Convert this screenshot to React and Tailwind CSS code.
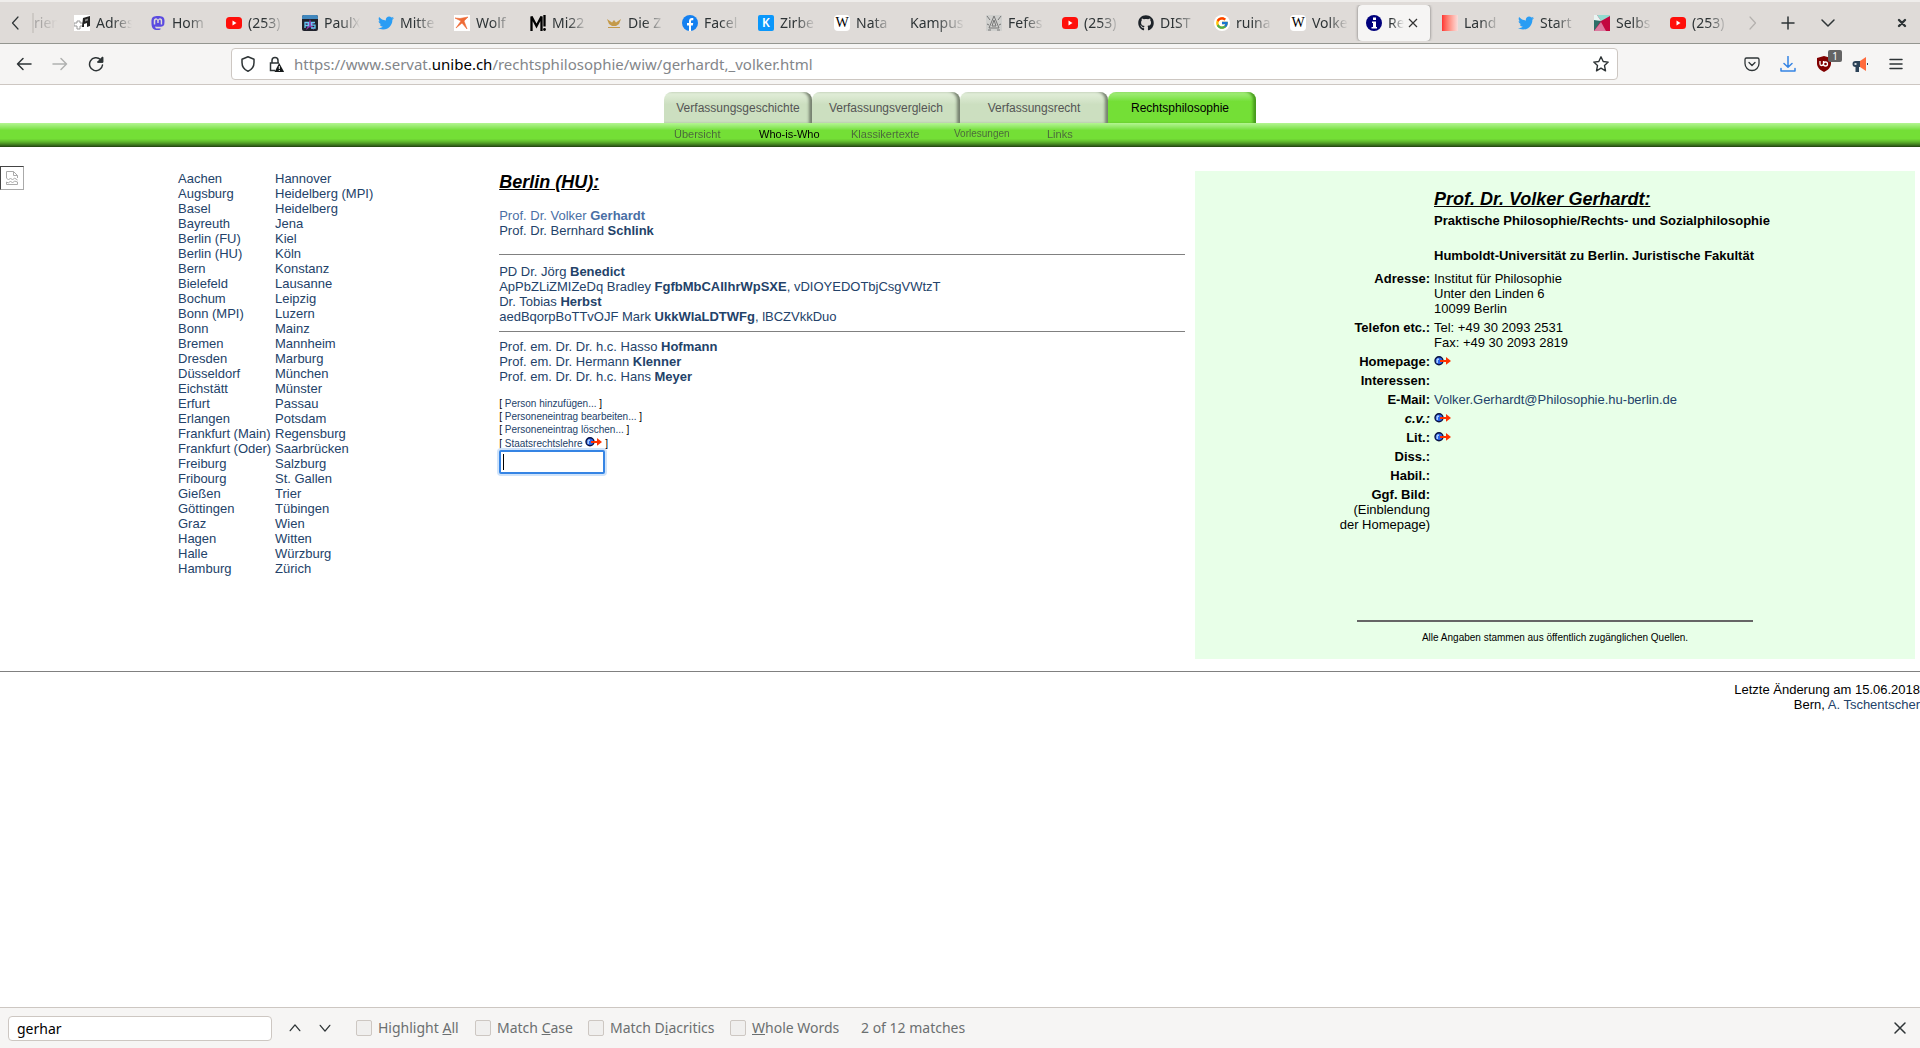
import React from "react";
import { FaTwitter, FaGithub, FaMastodon } from "react-icons/fa";
import { FcGoogle } from "react-icons/fc";

const citiesLeft = ["Aachen", "Augsburg", "Basel", "Bayreuth", "Berlin (FU)", "Berlin (HU)", "Bern", "Bielefeld", "Bochum", "Bonn (MPI)", "Bonn", "Bremen", "Dresden", "Düsseldorf", "Eichstätt", "Erfurt", "Erlangen", "Frankfurt (Main)", "Frankfurt (Oder)", "Freiburg", "Fribourg", "Gießen", "Göttingen", "Graz", "Hagen", "Halle", "Hamburg"];
const citiesRight = ["Hannover", "Heidelberg (MPI)", "Heidelberg", "Jena", "Kiel", "Köln", "Konstanz", "Lausanne", "Leipzig", "Luzern", "Mainz", "Mannheim", "Marburg", "München", "Münster", "Passau", "Potsdam", "Regensburg", "Saarbrücken", "Salzburg", "St. Gallen", "Trier", "Tübingen", "Wien", "Witten", "Würzburg", "Zürich"];

const Youtube = () => (
  <svg width="16" height="16" viewBox="0 0 16 16">
    <rect y="2" width="16" height="12" rx="3.5" fill="#ff0f0a" />
    <path d="M6.500 5.500v5l4-2.500z" fill="#fff" />
  </svg>
);
const Twitter = () => <FaTwitter size={16} color="#2a9df4" />;
const Wiki = () => (
  <span className="flex size-4 items-center justify-center rounded-sm bg-white font-['Liberation_Serif',serif] text-sm leading-4 text-black">W</span>
);
const Signpost = () => (
  <svg width="16" height="16" viewBox="0 0 16 16">
    <rect width="16" height="16" fill="#fff" />
    <path d="M0 8h3V6h3v2h3v3H6v3H3v-3H0z" fill="none" stroke="#999" />
    <path d="M9 3l7-2v10l-3 1V8l-3 1v3H8z" fill="#222" />
    <path d="M11 4.500l3-1v2l-3 1z" fill="#888" />
  </svg>
);
const PaulIcon = () => (
  <svg width="16" height="16" viewBox="0 0 16 16">
    <rect width="16" height="16" rx="2" fill="#20222c" />
    <path d="M2 0h12a2 2 0 0 1 2 2v2H0V2a2 2 0 0 1 2-2z" fill="#4187bd" />
    <path d="M8 4l1 3h4l-3 3 2 5-4-3-4 3 2-5-3-3h4z" fill="#8c37a8" />
    <path d="M3 13V7.500h3.500v3H3M13 7.500H9.500v2.700H13V13H9" fill="none" stroke="#68c8f5" strokeWidth="1.300" />
  </svg>
);
const Wolf = () => (
  <svg width="16" height="16" viewBox="0 0 16 16">
    <rect width="16" height="16" fill="#fff" />
    <path d="M1 3l5 .5L14 2l-4 4 3 8-5-6-6 5 5-7z" fill="#ee6a35" stroke="#ee6a35" strokeWidth=".6" />
  </svg>
);
const MIcon = () => (
  <svg width="16" height="16" viewBox="0 0 16 16">
    <path d="M1.500 16V1.500L6.500 11l5-9.500V16M14.500 0v11.500" fill="none" stroke="#000" strokeWidth="2.300" />
    <circle cx="14.500" cy="14.500" r="1.400" />
  </svg>
);
const Eagle = () => (
  <svg width="16" height="16" viewBox="0 0 16 16" fill="#c49a4a">
    <path d="M1 4l5 3.500L8 5l2 2.500L15 4l-2 5-3 2H6L3 9z" />
    <rect x="2" y="12" width="12" height="1" />
  </svg>
);
const Facebook = () => (
  <svg width="16" height="16" viewBox="0 0 16 16">
    <circle cx="8" cy="8" r="8" fill="#1480f0" />
    <path d="M7 16v-5.500H5V8h2V6.300C7 4.200 8.200 3 10 3h1.300v2.200h-1C9.300 5.200 9 5.700 9 6.500V8h2.200l-.4 2.500H9V16z" fill="#fff" />
  </svg>
);
const Zirbe = () => (
  <span className="flex size-4 items-center justify-center rounded-xs bg-[#0a97fb] text-xs leading-4 font-semibold text-white">K</span>
);
const Fefe = () => (
  <svg width="16" height="16" viewBox="0 0 16 16" fill="none" stroke="#777">
    <rect width="16" height="16" fill="#d0d0ce" stroke="none" />
    <path d="M8 1l5 12H3zM8 5l2 6H6zM1 1l3 4M15 1l-3 4M1 9l2 1M15 9l-2 1M2 15h3M11 15h3" />
  </svg>
);
const Google = () => (
  <span className="flex size-4 items-center justify-center rounded-full bg-white"><FcGoogle size={14} /></span>
);
const Info = () => (
  <svg width="16" height="16" viewBox="0 0 16 16">
    <circle cx="8" cy="8" r="8" fill="#00007c" />
    <path d="M7 2.500h3v2.500H7zM6 6.500h4V12h1v1.500H5.500V12H7V8H6z" fill="#fff" />
  </svg>
);
const Land = () => <span className="block size-4 bg-linear-to-r from-[#ff3030] to-[#f6dedc]" />;
const Selbst = () => (
  <svg width="16" height="16" viewBox="0 0 16 16">
    <rect width="16" height="16" fill="#c3073f" />
    <path d="M3 0h13v1L7 6z" fill="#93dbcf" />
    <path d="M0 0h3l4 6-7 2z" fill="#e9f5f3" />
    <path d="M0 5l7 1-7 10z" fill="#2d6e68" />
    <path d="M0 16L7 7l5 9z" fill="#dc7ba0" />
  </svg>
);
const Mastodon = () => <FaMastodon size={16} color="#5b4be0" />;
const Github = () => <FaGithub size={16} color="#1d2329" />;

const tabs = [
  [Signpost, "Adres"], [Mastodon, "Hom"], [Youtube, "(253)"], [PaulIcon, "PaulX"], [Twitter, "Mitte"],
  [Wolf, "Wolf"], [MIcon, "Mi22"], [Eagle, "Die Z"], [Facebook, "Facel"], [Zirbe, "Zirbe"], [Wiki, "Nata"], [null, "Kampus"],
  [Fefe, "Fefes"], [Youtube, "(253)"], [Github, "DIST"], [Google, "ruina"], [Wiki, "Volke"],
  [Info, "Rec", true], [Land, "Land"], [Twitter, "Start"], [Selbst, "Selbs"], [Youtube, "(253)"],
];

function Tab({ Icon, label, active }) {
  if (active) {
    return (
      <div className="mx-0.5 flex h-9 w-18 items-center gap-1.5 rounded-sm bg-[#f6f5f4] px-2 shadow-[0_0_3px_rgba(0,0,0,0.5)]">
        <span className="shrink-0"><Icon /></span>
        <span className="w-4 overflow-hidden whitespace-nowrap mask-r-from-20% mask-r-to-100%">{label}</span>
        <button aria-label="Close tab" className="-ml-0.5 shrink-0">
          <svg width="10" height="10" viewBox="0 0 10 10" stroke="#333" strokeWidth="1.200"><path d="M1 1l8 8M9 1l-8 8" /></svg>
        </button>
      </div>
    );
  }
  return (
    <button className="flex h-9 w-19 items-center gap-1.5 pr-1 pl-2.5 text-left">
      {Icon && <span className="shrink-0"><Icon /></span>}
      <span className="min-w-0 flex-1 overflow-hidden whitespace-nowrap mask-r-from-40% mask-r-to-90%">{label}</span>
    </button>
  );
}

const Stroke = ({ size = 16, color = "#2e3436", width = 1.5, d, children }) => (
  <svg width={size} height={size} viewBox="0 0 16 16" fill="none" stroke={color} strokeWidth={width} strokeLinecap="round" strokeLinejoin="round">
    {d && <path d={d} />}
    {children}
  </svg>
);

function TabBar() {
  return (
    <div className="flex h-11 items-center border-t-2 border-b border-t-[#efedeb] border-b-[#949690] bg-[#dfdbd8] text-sm text-[#2e3436]">
      <button aria-label="Scroll tabs left" className="flex w-8 shrink-0 justify-center"><Stroke d="M10 2L4.500 8l5.500 6" width={1.2} /></button>
      <div className="flex min-w-0 flex-1 items-center overflow-hidden">
        <span className="w-8 shrink-0 border-l-2 border-[#cdc9c5] text-[#a9a7a5] mask-r-from-30% mask-r-to-80%">rien</span>
        {tabs.map(([Icon, label, active], i) => <div key={i} className="shrink-0"><Tab Icon={Icon} label={label} active={active} /></div>)}
      </div>
      <div className="flex shrink-0 items-center">
        <button aria-label="Scroll tabs right" className="flex w-8 justify-center"><Stroke d="M6 2l5.500 6L6 14" color="#b4b1ae" width={1.2} /></button>
        <button aria-label="New tab" className="flex w-10 justify-center"><Stroke d="M8 2v12M2 8h12" /></button>
        <button aria-label="List all tabs" className="flex w-10 justify-center"><Stroke d="M2 5l6 6 6-6" /></button>
        <button aria-label="Close window" className="ml-9 flex w-9 justify-center"><Stroke d="M5 5l6 6M11 5l-6 6" width={2.4} /></button>
      </div>
    </div>
  );
}

function Toolbar() {
  return (
    <div className="flex h-[41px] items-center border-b border-[#cdc7c2] bg-[#f6f5f4] px-1.5">
      <div className="flex w-[225px] shrink-0">
        <button aria-label="Back" className="flex w-9 justify-center"><Stroke d="M15 8H1.500M7 2.500L1.500 8 7 13.500" /></button>
        <button aria-label="Forward" className="flex w-9 justify-center"><Stroke d="M1 8h13.500M9 2.500L14.500 8 9 13.500" color="#b0b1b0" /></button>
        <button aria-label="Reload" className="flex w-9 justify-center"><Stroke d="M12.500 3.500A6.500 6.500 0 1 0 14.500 9M14.500 1.500v4.500H10"><path d="M14.500 1.500V6H10z" fill="#2e3436" /></Stroke></button>
      </div>
      <div className="flex h-8 min-w-0 flex-1 items-center rounded-sm border border-[#cdc7c2] bg-white px-2">
        <Stroke d="M8 .8l6 2.400v3.300c0 4.500-3 7.500-6 8.700-3-1.200-6-4.200-6-8.700V3.200z" />
        <svg className="ml-3" width="16" height="16" viewBox="0 0 16 16">
          <path d="M4 7V4.500a3 3 0 0 1 6 0V7M7 14.500H2.500V7H11" fill="none" stroke="#2e3436" strokeWidth="1.500" />
          <path d="M11.200 7l5 9H6.500z" fill="#15191a" />
          <path d="M11.300 10v3M11.300 14v1" stroke="#fff" />
        </svg>
        <div className="relative ml-2.5 flex-1 text-[15px] text-[#83868a]">
          <input aria-label="Address" className="absolute inset-0 w-full bg-transparent outline-none" />
          <span>https://www.servat.<span className="text-black">unibe.ch</span>/rechtsphilosophie/wiw/gerhardt,_volker.html</span>
        </div>
        <button aria-label="Bookmark this page"><Stroke d="M8 .8l2.200 4.700 5 .6-3.700 3.500 1 5.200L8 12.200l-4.500 2.600 1-5.200L.8 6.100l5-.6z" width={1.4} /></button>
      </div>
      <div className="ml-29 flex shrink-0">
        <button aria-label="Save to Pocket" className="flex w-9 justify-center"><Stroke d="M2.500 2h11A1.500 1.500 0 0 1 15 3.500V7.500A7 7 0 0 1 1 7.500V3.500A1.500 1.500 0 0 1 2.500 2zM5 6.500l3 3 3-3" width={1.3} /></button>
        <button aria-label="Downloads" className="flex w-9 justify-center"><Stroke d="M8 0.500v10.500M4 7.500L8 11.300l4-3.800M1 12.500v2.500h14v-2.500" color="#3584e4" /></button>
        <button aria-label="uBlock Origin" className="relative flex w-9 justify-center">
          <svg width="16" height="16" viewBox="0 0 16 16"><path d="M8 0l7 2v5.500c0 4-3.500 7-7 8.500-3.500-1.500-7-4.500-7-8.500V2z" fill="#800000" /><path d="M4 5v3q0 1.500 1.500 1.500T7.500 8V5M7.500 8q0 2 2 2t2-2-2-2-2 2" fill="none" stroke="#fff" strokeWidth="1.300" /></svg>
          <span className="absolute -top-1.5 right-0 h-3 w-3.5 rounded-xs bg-[#646464] text-center text-[10px] leading-3 text-white">1</span>
        </button>
        <button aria-label="Announcements" className="flex w-9 justify-center">
          <svg width="16" height="16" viewBox="0 0 16 16"><path d="M8 5v6H7v5H3.500v-5a3 3 0 0 1 0-6z" fill="#2d4358" /><path d="M8 5l6-4v14l-6-4z" fill="#ff6b3d" /><path d="M2.500 7h2v2h-2z" fill="#d8dce0" /><path d="M15 7h1v2h-1z" fill="#2d4358" /></svg>
        </button>
        <button aria-label="Open application menu" className="flex w-9 justify-center"><Stroke d="M2 3.500h12M2 8h12M2 12.500h12" /></button>
      </div>
    </div>
  );
}

const sections = ["Verfassungsgeschichte", "Verfassungsvergleich", "Verfassungsrecht", "Rechtsphilosophie"];

function SiteHeader() {
  return (
    <header className="bg-white pt-[7px]">
      <nav aria-label="Sections" className="mx-auto flex w-[592px] text-xs">
        {sections.map((s) => s === "Rechtsphilosophie"
          ? <a key={s} href="#" className="flex h-[31px] w-37 items-center justify-center rounded-t-lg bg-linear-to-b from-[#a5ee7d] to-[#74df36] to-30% pr-1 text-black shadow-[inset_-4px_0_3px_-1px_#469a1b]">{s}</a>
          : <a key={s} href="#" className="flex h-[31px] w-37 items-center justify-center rounded-t-lg bg-linear-to-b from-[#deebd5] from-10% to-[#ccdfc0] to-40% text-[#555] shadow-[inset_-4px_0_3px_-1px_#76806f]">{s}</a>)}
      </nav>
      <div className="h-6 bg-linear-to-b from-[#b4f592] via-[#74df36] via-35% to-[#1f4010]">
        <div className="h-6 bg-linear-to-b from-[#b4f592] from-0% via-[#74df36] via-30% to-[#74df36] to-70% mask-b-from-65% mask-b-to-100%">
          <nav aria-label="Rechtsphilosophie" className="mx-auto flex w-[592px] pl-2.5 text-[11px] leading-[22px] text-[#4c6a3c]">
            <a href="#" className="w-[85px]">Übersicht</a>
            <a href="#" className="w-[92px] text-black">Who-is-Who</a>
            <a href="#" className="w-[103px]">Klassikertexte</a>
            <a href="#" className="w-[93px] text-[10px]">Vorlesungen</a>
            <a href="#">Links</a>
          </nav>
        </div>
      </div>
    </header>
  );
}

const GlobeArrow = () => (
  <svg width="17" height="10" viewBox="0 0 17 10" className="inline-block align-baseline">
    <circle cx="5" cy="4.800" r="4" fill="#2c62e8" stroke="#0a1240" strokeWidth="1.400" />
    <path d="M3 2.500h2v1.500H4V7H2.500V4z" fill="#a8d0ff" />
    <path d="M6 4h6V1l5 3.900-5 3.900V6H6z" fill="#ff3200" />
  </svg>
);

const Person = ({ before, name, after, current }) => (
  <li><a href="#" className={current ? "text-[#4a6fa5]" : undefined}>{before} <b>{name}</b>{after}</a></li>
);

function CityList({ items, className }) {
  return <ul className={className}>{items.map((c) => <li key={c}><a href="#">{c}</a></li>)}</ul>;
}

const details = [
  ["Adresse:", <>Institut für Philosophie<br />Unter den Linden 6<br />10099 Berlin</>],
  ["Telefon etc.:", <>Tel: +49 30 2093 2531<br />Fax: +49 30 2093 2819</>],
  ["Homepage:", <a href="#" aria-label="Homepage"><GlobeArrow /></a>],
  ["Interessen:", null],
  ["E-Mail:", <a href="#" className="text-[#234269]">Volker.Gerhardt@Philosophie.hu-berlin.de</a>],
  [<i>c.v.:</i>, <a href="#" aria-label="c.v."><GlobeArrow /></a>],
  ["Lit.:", <a href="#" aria-label="Literatur"><GlobeArrow /></a>],
  ["Diss.:", null],
  ["Habil.:", null],
  [<>Ggf. Bild:<br /><span className="font-normal">(Einblendung<br />der Homepage)</span></>, null],
];

function Profile() {
  return (
    <section className="mt-[5px] mr-[5px] w-[37.5%] shrink-0 bg-[#e8ffe8] pt-4 pb-[14px]">
      <table className="w-full border-collapse">
        <tbody>
          <tr>
            <td className="w-[235px]" />
            <td className="pl-1">
              <h1 className="text-lg leading-6 font-bold italic underline">Prof. Dr. Volker Gerhardt:</h1>
              <p className="mt-0.5 font-bold">Praktische Philosophie/Rechts- und Sozialphilosophie</p>
              <p className="mt-5 mb-2 font-bold">Humboldt-Universität zu Berlin. Juristische Fakultät</p>
            </td>
          </tr>
          {details.map(([label, value], i) => (
            <tr key={i} className="align-top">
              <th scope="row" className="pb-1 text-right font-bold">{label}</th>
              <td className="pb-1 pl-1">{value}</td>
            </tr>
          ))}
        </tbody>
      </table>
      <hr className="mx-auto mt-[84px] w-[55%] border-t-2 border-[#666]" />
      <p className="mt-2 text-center text-[10px]">Alle Angaben stammen aus öffentlich zugänglichen Quellen.</p>
    </section>
  );
}

function FindBar() {
  const options = [
    [<>Highlight <u>A</u>ll</>, "w-[119px]"],
    [<>Match <u>C</u>ase</>, "w-[113px]"],
    [<>Match D<u>i</u>acritics</>, "w-[142px]"],
    [<><u>W</u>hole Words</>, "w-[131px]"],
  ];
  return (
    <footer className="flex h-[41px] items-center border-t border-[#cdc7c2] bg-[#f6f5f4] px-2 text-sm text-[#6b6f70]">
      <input aria-label="Find in page" defaultValue="gerhar" className="h-[25px] w-[264px] rounded-sm border border-[#cdc7c2] bg-white px-2 text-black outline-none" />
      <button aria-label="Previous match" className="ml-4 flex w-[30px]"><Stroke size={14} d="M2.500 11L8 4.500l5.500 6.500" /></button>
      <button aria-label="Next match" className="flex w-[38px]"><Stroke size={14} d="M2.500 5L8 11.500 13.500 5" /></button>
      {options.map(([label, w], i) => (
        <label key={i} className={"flex items-center gap-1.5 " + w}>
          <input type="checkbox" className="size-4 appearance-none rounded-xs border border-[#cdc7c2] bg-[#f0efee]" />
          <span>{label}</span>
        </label>
      ))}
      <span className="flex-1">2 of 12 matches</span>
      <button aria-label="Close find bar" className="px-1"><Stroke d="M3 3l10 10M13 3L3 13" /></button>
    </footer>
  );
}

export default function App() {
  return (
    <div className="flex min-h-screen flex-col bg-white font-['Noto_Sans',sans-serif] text-[15px]">
      <TabBar />
      <Toolbar />
      <main className="flex-1 font-['Liberation_Sans',Arial,sans-serif] text-[13px] leading-[15px] text-black">
        <SiteHeader />
        <div className="flex items-start pt-[19px]">
          <div className="size-6 shrink-0 border border-t-[#444] border-r-[#aaa] border-b-[#aaa] border-l-[#444] p-1">
            <svg width="14" height="14" viewBox="0 0 14 14" fill="none" stroke="#aaa"><path d="M1.500 7V.5h7l4 4V7M8.500.5v4h4M1.500 7l2 2 2-2 2 2 2-2 3 2M1.500 13.500h11V11l-3-1-2 2-2-2-2 2-2-1z" /></svg>
          </div>
          <div className="mt-[5px] flex w-[24.75%] shrink-0 pl-[154px] text-[#234269]">
            <CityList items={citiesLeft} className="w-[97px] shrink-0 whitespace-nowrap" />
            <CityList items={citiesRight} className="whitespace-nowrap" />
          </div>
          <section className="mt-[5px] mr-2.5 min-w-0 flex-1 text-[#234269]">
            <h2 className="text-lg leading-[22px] font-bold text-black italic underline">Berlin (HU):</h2>
            <ul className="mt-[15px]">
              <Person before="Prof. Dr. Volker" name="Gerhardt" current />
              <Person before="Prof. Dr. Bernhard" name="Schlink" />
            </ul>
            <hr className="mt-4 mb-[9px] border-[#808080]" />
            <ul>
              <Person before="PD Dr. Jörg" name="Benedict" />
              <Person before="ApPbZLiZMIZeDq Bradley" name="FgfbMbCAIlhrWpSXE" after=", vDIOYEDOTbjCsgVWtzT" />
              <Person before="Dr. Tobias" name="Herbst" />
              <Person before="aedBqorpBoTTvOJF Mark" name="UkkWlaLDTWFg" after=", lBCZVkkDuo" />
            </ul>
            <hr className="my-[7px] border-[#808080]" />
            <ul>
              <Person before="Prof. em. Dr. Dr. h.c. Hasso" name="Hofmann" />
              <Person before="Prof. em. Dr. Hermann" name="Klenner" />
              <Person before="Prof. em. Dr. Dr. h.c. Hans" name="Meyer" />
            </ul>
            <ul className="mt-[13px] text-[10px] leading-[13px]">
              {["Person hinzufügen...", "Personeneintrag bearbeiten...", "Personeneintrag löschen..."].map((t) => (
                <li key={t}><span className="text-black">[ </span><a href="#">{t}</a><span className="text-black"> ]</span></li>
              ))}
              <li className="pt-px"><span className="text-black">[ </span><a href="#">Staatsrechtslehre <GlobeArrow /></a><span className="text-black"> ]</span></li>
            </ul>
            <div className="relative w-[106px]">
              <input aria-label="Suche" className="block h-6 w-full rounded-xs border-2 border-[#3584e4] bg-white px-1 text-sm text-black ring-2 ring-[#cfe3fa] outline-none" />
              <span className="absolute top-1 left-1 h-4 w-px bg-black" />
            </div>
          </section>
          <Profile />
        </div>
        <div className="mt-3 border-t border-[#808080] pt-2.5 text-right">
          <p>Letzte Änderung am 15.06.2018</p>
          <p>Bern, <a href="#" className="text-[#234269]">A. Tschentscher</a></p>
        </div>
      </main>
      <FindBar />
    </div>
  );
}
